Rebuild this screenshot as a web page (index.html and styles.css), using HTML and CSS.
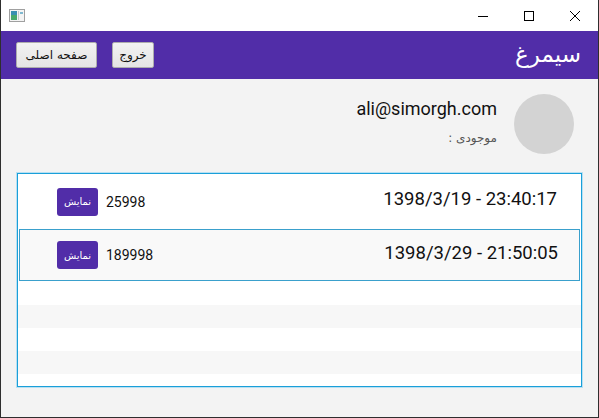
FILE: index.html
```html
<!DOCTYPE html>
<html lang="fa">
<head>
<meta charset="utf-8">
<title>سیمرغ</title>
<link rel="stylesheet" href="styles.css">
</head>
<body>
<div class="window">
  <div class="titlebar">
    <svg class="app-icon" width="16" height="13" viewBox="0 0 16 13">
      <rect x="0.5" y="0.5" width="15" height="12" fill="#f4f4f4" stroke="#a0a0a0"/>
      <rect x="2" y="2" width="6" height="9" fill="#3a8fb0"/>
      <rect x="2" y="6" width="6" height="5" fill="#4aa86a"/>
      <rect x="9" y="2" width="1" height="9" fill="#c8c8c8"/>
      <rect x="11" y="3" width="3" height="2" fill="#7fb8d0"/>
    </svg>
    <div class="controls">
      <div class="ctl">
        <svg width="12" height="12" viewBox="0 0 12 12"><line x1="1" y1="6.5" x2="11" y2="6.5" stroke="#000" stroke-width="1"/></svg>
      </div>
      <div class="ctl">
        <svg width="12" height="12" viewBox="0 0 12 12"><rect x="1.5" y="1.5" width="9" height="9" fill="none" stroke="#000" stroke-width="1"/></svg>
      </div>
      <div class="ctl">
        <svg width="12" height="12" viewBox="0 0 12 12"><path d="M1 1 L11 11 M11 1 L1 11" stroke="#000" stroke-width="1"/></svg>
      </div>
    </div>
  </div>
  <div class="header">
    <div class="header-buttons">
      <button class="hbtn">صفحه اصلی</button>
      <button class="hbtn">خروج</button>
    </div>
    <div class="brand">سیمرغ</div>
  </div>
  <div class="content">
    <div class="profile">
      <div class="profile-text">
        <div class="email">ali@simorgh.com</div>
        <div class="balance">موجودی :</div>
      </div>
      <div class="avatar"></div>
    </div>
    <div class="list">
      <div class="item">
        <button class="show">نمایش</button>
        <span class="amount">25998</span>
        <span class="date">1398/3/19 - 23:40:17</span>
      </div>
      <div class="item selected">
        <button class="show">نمایش</button>
        <span class="amount">189998</span>
        <span class="date">1398/3/29 - 21:50:05</span>
      </div>
      <div class="stripe"></div>
      <div class="stripe alt"></div>
      <div class="stripe"></div>
      <div class="stripe alt"></div>
      <div class="stripe last"></div>
    </div>
  </div>
</div>
</body>
</html>
```
FILE: styles.css
```css
html, body {
  margin: 0;
  padding: 0;
}
body {
  width: 599px;
  height: 418px;
  overflow: hidden;
  font-family: "Roboto", "DejaVu Sans", sans-serif;
  background: #2e2e2e;
}
.window {
  width: 597px;
  height: 417px;
  margin-left: 1px;
  display: flex;
  flex-direction: column;
  background: #f3f3f3;
}
.titlebar {
  height: 31px;
  background: #ffffff;
  display: flex;
  align-items: center;
  justify-content: space-between;
  flex-shrink: 0;
}
.app-icon {
  margin-left: 8px;
  margin-top: -1px;
}
.controls {
  display: flex;
  height: 31px;
}
.ctl {
  width: 46px;
  height: 31px;
  display: flex;
  align-items: center;
  justify-content: center;
}
.ctl svg {
  display: block;
}
.header {
  height: 48px;
  background: #512da8;
  display: flex;
  align-items: center;
  justify-content: space-between;
  flex-shrink: 0;
}
.header-buttons {
  display: flex;
  gap: 15px;
  margin-left: 15px;
}
.hbtn {
  height: 26px;
  padding: 0 6px;
  border: 1px solid #adadad;
  border-radius: 2px;
  background: linear-gradient(#f2f2f2, #e4e4e4);
  font-family: "DejaVu Sans", sans-serif;
  font-size: 12px;
  color: #111;
  direction: rtl;
}
.hbtn:first-child {
  width: 81px;
}
.hbtn:last-child {
  width: 42px;
}
.brand {
  color: #ffffff;
  font-family: "DejaVu Sans", sans-serif;
  font-size: 23px;
  margin-right: 17px;
  margin-top: -3px;
  direction: rtl;
}
.content {
  flex: 1;
  display: flex;
  flex-direction: column;
}
.profile {
  display: flex;
  justify-content: flex-end;
  align-items: flex-start;
  padding: 15px 24px 0 0;
  gap: 17px;
  height: 94px;
  box-sizing: border-box;
  flex-shrink: 0;
}
.profile-text {
  display: flex;
  flex-direction: column;
  align-items: flex-end;
  padding-top: 4px;
}
.email {
  font-size: 18px;
  color: #111;
  line-height: 22px;
}
.balance {
  margin-top: 11px;
  font-family: "DejaVu Sans", sans-serif;
  font-size: 12px;
  color: #555;
  direction: rtl;
}
.avatar {
  width: 60px;
  height: 60px;
  border-radius: 50%;
  background: #d3d3d3;
}
.list {
  margin: 0 16px 0 16px;
  height: 212px;
  border: 1px solid #1a9fd9;
  box-shadow: 0 0 0 1px #b8e0f2;
  background: #ffffff;
  display: flex;
  flex-direction: column;
  overflow: hidden;
  flex-shrink: 0;
}
.item {
  height: 55px;
  display: flex;
  align-items: center;
  padding-left: 39px;
  padding-right: 24px;
  flex-shrink: 0;
  box-sizing: border-box;
}
.item.selected {
  height: 52px;
  margin: 0 1px 0 1px;
  padding-left: 37px;
  padding-right: 21px;
  border: 1px solid #3aa0cc;
  background: #f9f9f9;
}
.show {
  width: 41px;
  height: 28px;
  border: none;
  border-radius: 3px;
  background: #512da8;
  color: #ffffff;
  font-family: "DejaVu Sans", sans-serif;
  font-size: 10px;
  padding: 0;
  direction: rtl;
}
.amount {
  margin-left: 8px;
  font-size: 14px;
  color: #111;
}
.date {
  margin-left: auto;
  font-size: 18.5px;
  color: #111;
  margin-top: -5px;
}
.stripe {
  height: 24px;
  flex-shrink: 0;
  background: #ffffff;
}
.stripe.alt {
  height: 23px;
  background: #f7f7f7;
}
.stripe + .stripe {
  height: 23px;
}
.stripe.last {
  flex: 1;
}
```
